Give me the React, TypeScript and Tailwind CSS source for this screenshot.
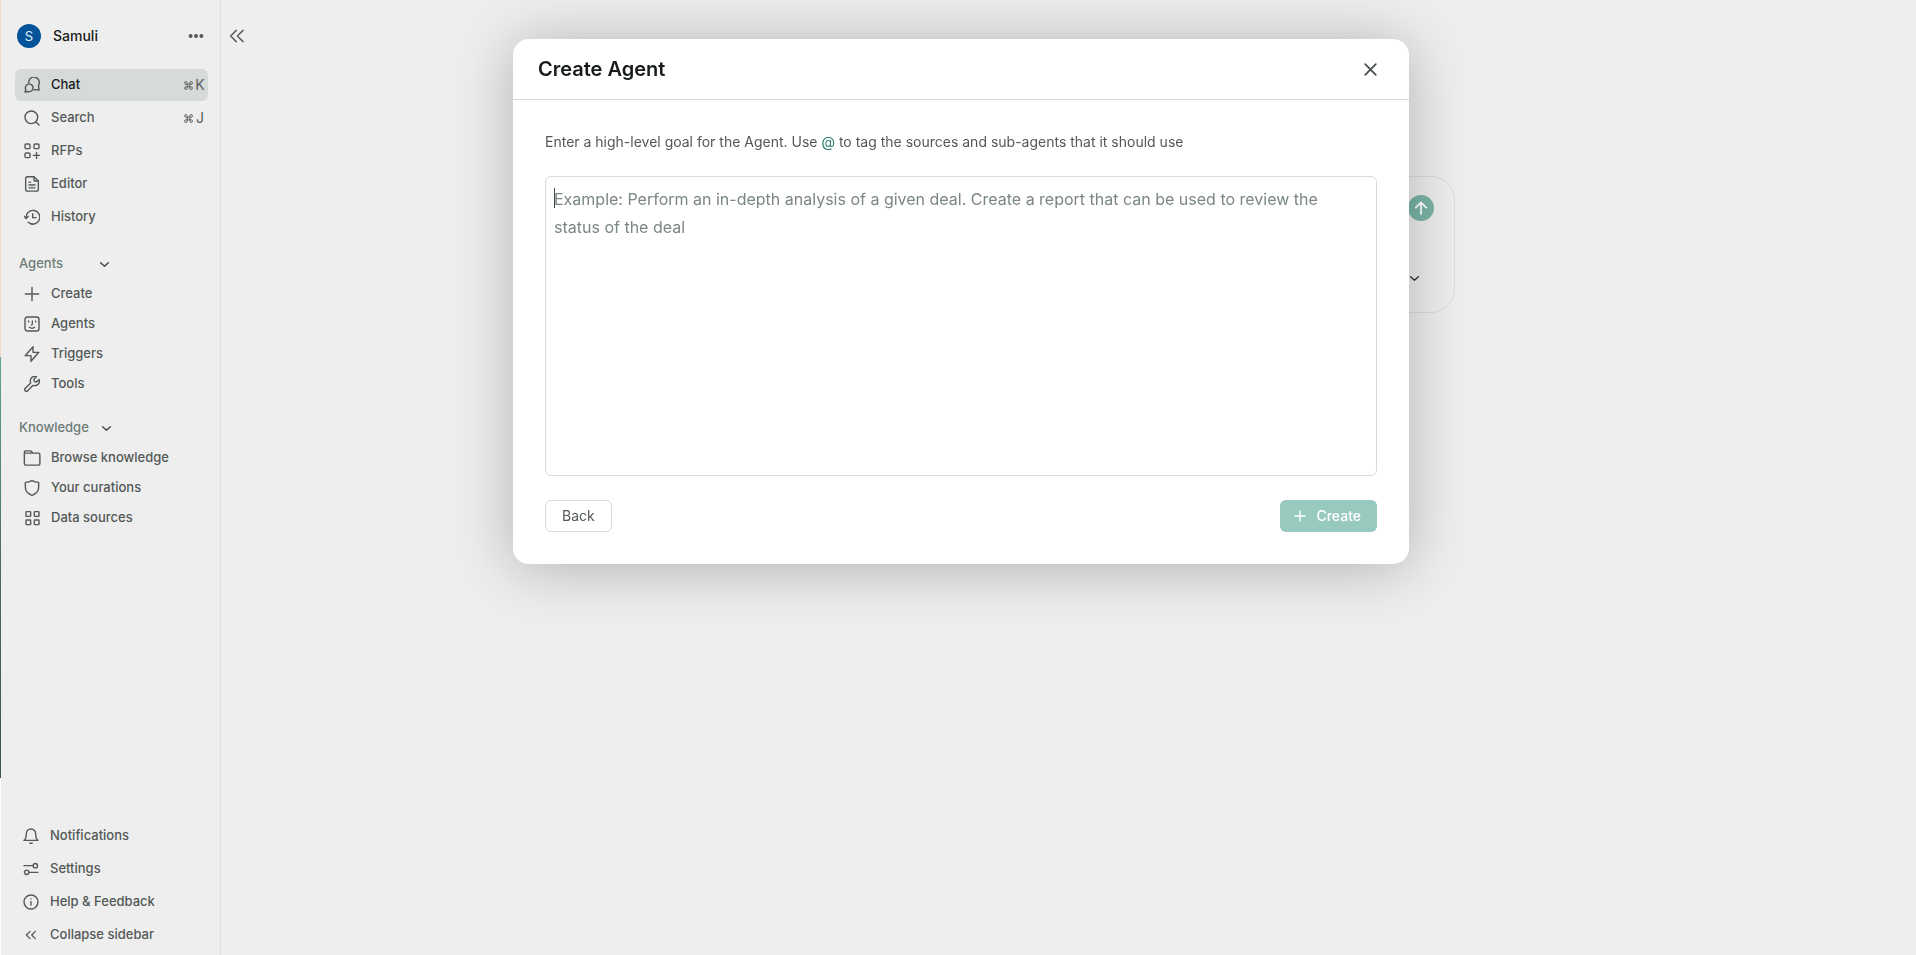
import type { ReactNode } from "react";

type IconProps = { children: ReactNode; className?: string; strokeWidth?: number };

function Icon({ children, className = "size-4", strokeWidth = 2.1 }: IconProps) {
  return (
    <svg
      viewBox="0 0 24 24"
      fill="none"
      stroke="currentColor"
      strokeWidth={strokeWidth}
      strokeLinecap="round"
      strokeLinejoin="round"
      aria-hidden="true"
      className={`shrink-0 ${className}`}
    >
      {children}
    </svg>
  );
}

const icons = {
  chat: (
    <Icon>
      <path d="M7 8.500A8 8 0 1 1 22 12c-.2.900-.1 1.800 0 2.600l.6 5-4.800-.6c-1-.1-1.700.2-2.500.4" />
      <path d="M7.800 22a5.800 5.800 0 1 0-5.200-3.300L1.500 22.600l3.800-.9c.8.200 1.600.4 2.500.3Z" />
    </Icon>
  ),
  search: (
    <Icon>
      <circle cx="11" cy="11" r="9.500" />
      <path d="m18 18 4.500 4.500" />
    </Icon>
  ),
  rfps: (
    <Icon>
      <rect x="1.500" y="1.500" width="7.500" height="7" rx="1.800" />
      <rect x="15" y="1.500" width="7.500" height="7" rx="1.800" />
      <rect x="1.500" y="15" width="7.500" height="7" rx="1.800" />
      <path d="M18.800 14v9.500M14 18.500h9.500" />
    </Icon>
  ),
  editor: (
    <Icon>
      <path d="M2.500 20.500v-17A2.200 2.200 0 0 1 4.700 1.200H15l6.500 6.300v13a2.200 2.200 0 0 1-2.200 2.200H4.700a2.200 2.200 0 0 1-2.200-2.200Z" />
      <path d="M15 1.500v4.800c0 .8.500 1.300 1.300 1.300h5M7.500 17.800h9M7.500 13.500h9M7.500 9.200h2.500" />
    </Icon>
  ),
  history: (
    <Icon>
      <path d="M3.200 13.500A10.300 10.300 0 1 1 6.500 20" />
      <path d="M0 11l3.200 3.200L6.200 11M13 7v6h5M10 22c1 .500 2 .700 3 .700" />
    </Icon>
  ),
  plus: (
    <Icon>
      <path d="M12 2v20M2 12h20" />
    </Icon>
  ),
  agents: (
    <Icon>
      <rect x="1.500" y="1.500" width="21" height="21" rx="3.500" />
      <path d="M7 7.500v1.500M17.500 7.500v1.500M12.500 7.500v5c0 .8-.4 1.200-1.500 1.200M8 17c2.400 1.700 5.600 1.700 8 0" strokeWidth={1.900} />
    </Icon>
  ),
  triggers: (
    <Icon>
      <path d="M13.500 9.500V1L1.800 14.500h8.700V23L22.200 9.500Z" />
    </Icon>
  ),
  tools: (
    <Icon>
      <path d="M10 10.500 1.900 18.500a2.600 2.600 0 0 0 3.700 3.700L13.500 14c2.900 1 5.800.4 7.700-1.500 1.900-2 2.400-4.700 1.500-7.300l-3.900 3.900-3.200-.900-.9-3.300 3.900-3.900c-2.600-.9-5.300-.4-7.200 1.500C9.500 4.400 9 7.500 10 10.500Z" />
    </Icon>
  ),
  folder: (
    <Icon className="size-[18px]" strokeWidth={1.900}>
      <path d="M1.800 5.500V4a1.500 1.500 0 0 1 1.500-1.500h6.500c.5 0 .9.200 1.200.5l2.300 2.500H20.500a2 2 0 0 1 2 2v12a2 2 0 0 1-2 2h-16.700a2 2 0 0 1-2-2V5.500h11.500" />
    </Icon>
  ),
  shield: (
    <Icon>
      <path d="M12 .8c3 1.700 6.200 2.600 10 2.800v7.400c0 6-4.300 10-10 12-5.700-2-10-6-10-12V3.600C5.800 3.400 9 2.500 12 .8Z" />
    </Icon>
  ),
  grid: (
    <Icon>
      <rect x="3" y="2.500" width="7" height="7" rx="1" />
      <rect x="15.500" y="2.500" width="7" height="7" rx="1" />
      <rect x="3" y="15" width="7" height="7" rx="1" />
      <rect x="15.500" y="15" width="7" height="7" rx="1" />
    </Icon>
  ),
  bell: (
    <Icon>
      <path d="M19 8.500a7 7 0 0 0-14 0c0 7.500-3.500 10-3.500 10h21s-3.500-2.500-3.500-10M13.800 22.500c-.8 1-2.800 1-3.600 0" />
    </Icon>
  ),
  settings: (
    <Icon>
      <path d="M1.500 7h13M22.500 17h-13" />
      <circle cx="18.500" cy="7" r="3.300" />
      <circle cx="5.500" cy="17" r="3.300" />
    </Icon>
  ),
  info: (
    <Icon>
      <circle cx="12" cy="12" r="10.500" />
      <path d="M12 11.500v5M12 7.500v.1" />
    </Icon>
  ),
  collapse: (
    <Icon>
      <path d="M10.500 6.500 5 12l5.500 5.500M18.500 6.500 13 12l5.500 5.500" strokeWidth={1.900} />
    </Icon>
  ),
};

type ItemProps = {
  icon: keyof typeof icons;
  label: string;
  shortcut?: string;
  active?: boolean;
  dense?: boolean;
};

function NavItem({ icon, label, shortcut, active, dense }: ItemProps) {
  return (
    <a
      href="#"
      aria-current={active ? "page" : undefined}
      className={`flex items-center gap-2.5 rounded-md pr-0.5 pl-2 font-medium ${dense ? "h-[30px]" : "h-8"} ${
        active ? "bg-[#d6dad8] text-[#171c1a]" : "text-[#535957]"
      }`}
    >
      <span className="flex w-[18px] justify-center text-[#535957]">{icons[icon]}</span>
      <span className="grow">{label}</span>
      {shortcut && (
        <kbd className="flex items-center gap-px font-['Inter'] text-[#5a605e]">
          <svg viewBox="0 0 24 24" fill="none" stroke="currentColor" strokeWidth="2.600" className="size-[9px]" aria-label="Command">
            <path d="M15.500 5v14a3.500 3.500 0 1 0 3.500-3.500H5A3.500 3.500 0 1 0 8.500 19V5A3.500 3.500 0 1 0 5 8.500h14A3.500 3.500 0 1 0 15.500 5" />
          </svg>
          <span className="w-3 text-center text-sm leading-5 font-normal">{shortcut}</span>
        </kbd>
      )}
    </a>
  );
}

function Chevron() {
  return (
    <Icon className="size-[11px]" strokeWidth={2.900}>
      <path d="m3.500 8 8.500 8 8.500-8" />
    </Icon>
  );
}

function Section({ title, wide, children }: { title: string; wide?: boolean; children: ReactNode }) {
  return (
    <section className="mt-3.5">
      <button
        type="button"
        aria-expanded="true"
        className={`flex h-[30px] items-center pl-1 font-medium text-[#6d7b76] ${wide ? "gap-9" : "gap-3"}`}
      >
        {title}
        <span className="text-[#3f4543]">
          <Chevron />
        </span>
      </button>
      {children}
    </section>
  );
}

function Sidebar() {
  return (
    <div className="flex w-[221px] shrink-0 border-r border-[#dde0df]">
      <div className="w-px shrink-0 bg-white">
        <div className="h-[357px] bg-[#ecdcc3]" />
        <div className="h-[421px] bg-linear-to-b from-[#5fa398] via-[#4b6a69] to-[#3c5254]" />
      </div>
      <aside className="flex grow flex-col pr-3 pb-1 pl-3.5 text-[13px]">
        <div className="mt-5 mb-[17px] flex h-8 items-center pr-1 pl-0.5 text-sm">
          <span className="flex size-6 items-center justify-center rounded-full bg-[#02539a] text-[13px] text-[#e6edf3]">S</span>
          <span className="grow pl-3 font-medium text-[#171c1a]">Samuli</span>
          <button type="button" aria-label="Account menu" className="text-[#535957]">
            <svg viewBox="0 0 16 16" className="size-4" fill="currentColor" aria-hidden="true">
              <circle cx="2.600" cy="8" r="2" />
              <circle cx="8" cy="8" r="2" />
              <circle cx="13.400" cy="8" r="2" />
            </svg>
          </button>
        </div>
        <nav className="mb-0.5 flex flex-col gap-px">
          <NavItem icon="chat" label="Chat" shortcut="K" active />
          <NavItem icon="search" label="Search" shortcut="J" />
          <NavItem icon="rfps" label="RFPs" />
          <NavItem icon="editor" label="Editor" />
          <NavItem icon="history" label="History" />
        </nav>
        <Section title="Agents" wide>
          <NavItem icon="plus" label="Create" dense />
          <NavItem icon="agents" label="Agents" dense />
          <NavItem icon="triggers" label="Triggers" dense />
          <NavItem icon="tools" label="Tools" dense />
        </Section>
        <Section title="Knowledge">
          <NavItem icon="folder" label="Browse knowledge" dense />
          <NavItem icon="shield" label="Your curations" dense />
          <NavItem icon="grid" label="Data sources" dense />
        </Section>
        <div className="mt-auto -ml-px flex flex-col gap-px">
          <NavItem icon="bell" label="Notifications" />
          <NavItem icon="settings" label="Settings" />
          <NavItem icon="info" label="Help & Feedback" />
          <NavItem icon="collapse" label="Collapse sidebar" />
        </div>
      </aside>
    </div>
  );
}

function Composer() {
  return (
    <div className="mx-auto flex h-[137px] w-full max-w-[772px] flex-col items-end justify-between rounded-3xl border border-[#dadddc] px-5 py-[18px]">
      <button type="button" aria-label="Send" className="flex size-[26px] items-center justify-center rounded-full bg-[#7bb5a8] text-white">
        <Icon className="size-3.5" strokeWidth={3.200}>
          <path d="M12 22V2.500M3 11.500l9-9 9 9" />
        </Icon>
      </button>
      <button type="button" aria-label="Options" className="mr-3.5 mb-2.5 text-[#2f3533]">
        <Chevron />
      </button>
    </div>
  );
}

function CreateAgentDialog() {
  return (
    <div className="fixed inset-0 flex items-start justify-center pt-[39px] pl-1.5">
      <div
        role="dialog"
        aria-modal="true"
        aria-labelledby="dialog-title"
        className="w-full max-w-4xl rounded-2xl bg-white shadow-[0_4px_60px_rgba(0,0,0,0.26)]"
      >
        <header className="flex h-[61px] items-center justify-between border-b border-[#d6dad9] pr-[31px] pl-[25px]">
          <h2 id="dialog-title" className="text-xl font-semibold text-[#171c1a]">
            Create Agent
          </h2>
          <button type="button" aria-label="Close" className="text-[#474d4b]">
            <Icon className="size-[15px]" strokeWidth={2.800}>
              <path d="m3.500 3.500 17 17M20.500 3.500l-17 17" />
            </Icon>
          </button>
        </header>
        <form className="p-8" onSubmit={(e) => e.preventDefault()}>
          <label htmlFor="goal" className="block text-sm leading-5 text-[#535957]">
            Enter a high-level goal for the Agent. Use <span className="text-[#2e7d6b]">@</span> to tag the sources and sub-agents that it
            should use
          </label>
          <div className="relative mt-6">
            <textarea
              id="goal"
              placeholder="Example: Perform an in-depth analysis of a given deal. Create a report that can be used to review the status of the deal"
              className="block h-[300px] w-full resize-none rounded-md border border-[#d6dcda] bg-white px-2 py-2 text-base leading-7 text-[#171c1a] outline-none placeholder:text-[#7b8783]"
            />
            <span className="absolute top-3 left-[9px] h-5 w-px bg-[#3f4543]" aria-hidden="true" />
          </div>
          <div className="mt-6 flex items-center justify-between text-sm">
            <button type="button" className="h-8 rounded-md border border-[#d6dcda] px-4 text-[#535957]">
              Back
            </button>
            <button type="submit" className="flex h-8 items-center gap-2.5 rounded-md bg-[#97c9be] px-3.5 font-medium text-white">
              <Icon className="size-3" strokeWidth={2.800}>
                <path d="M12 2v20M2 12h20" />
              </Icon>
              <span className="pr-0.5">Create</span>
            </button>
          </div>
        </form>
      </div>
    </div>
  );
}

export default function App() {
  return (
    <div className="flex min-h-screen bg-[#eeeeee] font-['Inter',sans-serif]">
      <Sidebar />
      <main className="flex grow flex-col">
        <div className="flex h-[72px] items-center pl-[7px]">
          <button type="button" aria-label="Collapse sidebar" className="text-[#535957]">
            <Icon className="size-[18px]" strokeWidth={1.900}>
              <path d="m11 4.500-7.500 7.500 7.500 7.500M20 4.500 12.500 12l7.500 7.500" />
            </Icon>
          </button>
        </div>
        <div className="mt-[104px] px-6">
          <Composer />
        </div>
      </main>
      <CreateAgentDialog />
    </div>
  );
}
